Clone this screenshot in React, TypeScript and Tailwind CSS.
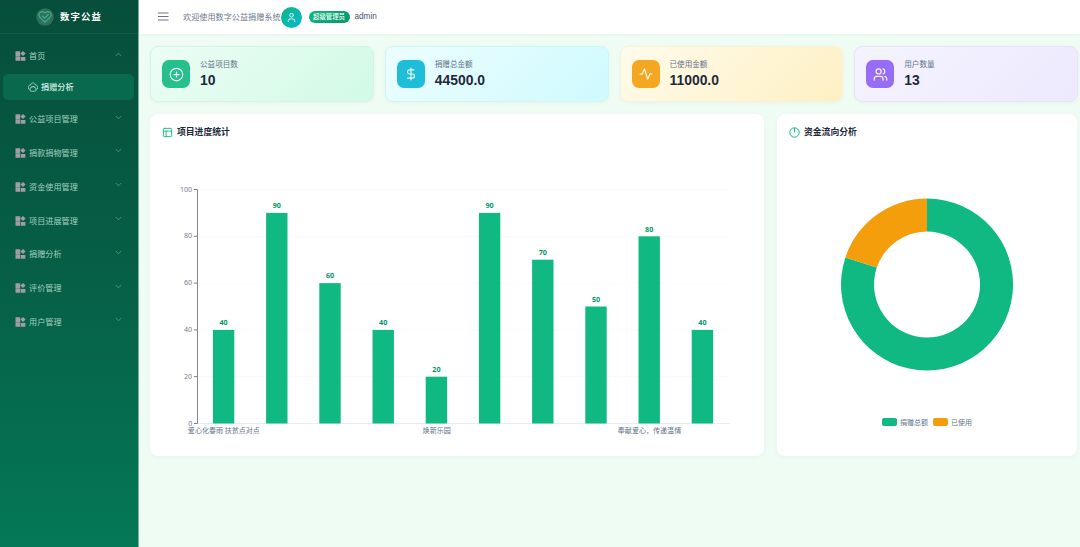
import React from "react";
import { Activity, CirclePlus, DollarSign, PanelsTopLeft, User, Users } from "lucide-react";

const MENU = ["公益项目管理", "捐款捐物管理", "资金使用管理", "项目进展管理", "捐赠分析", "评价管理", "用户管理"];
const BARS = [40, 90, 60, 40, 20, 90, 70, 50, 80, 40];
const CATEGORIES: { index: number; label: string }[] = [
  { index: 0, label: "爱心化春雨 扶贫点对点" },
  { index: 4, label: "焕新乐园" },
  { index: 8, label: "奉献爱心，传递温情" },
];

function Tiles() {
  return (
    <svg width="11" height="10" viewBox="0 0 11 10" fill="#a19da5" className="shrink-0">
      <path d="M0.5 0.2h4.7v4.9H.5zM.5 5.3h4.7v4.5H.5zM5.8 5.9h4.6v3.9H5.8zM8 0l2.6 2.5L8 5 5.4 2.5z" />
    </svg>
  );
}

function MenuRow({ label, open = false }: { label: string; open?: boolean }) {
  return (
    <div className="flex h-[33.8px] shrink-0 items-center pl-[15px] pr-[16px] pt-px">
      <Tiles />
      <span className="ml-[3px] grow text-[8.15px] leading-none text-[#a3cfc0]">{label}</span>
      <svg width="7" height="5" viewBox="0 0 7 5" fill="none" stroke="#5f9d89" strokeWidth="0.8" className="-mt-[4px]">
        <path d={open ? "M.8 4 3.5 1.2 6.2 4" : "M.8 1 3.5 3.8 6.2 1"} />
      </svg>
    </div>
  );
}

function Stat({ label, value, card, tile, children }: { label: string; value: string; card: string; tile: string; children: React.ReactNode }) {
  return (
    <div className={`flex h-[56px] items-center rounded-[8px] border pl-[11px] shadow-[0_1px_4px_rgba(16,120,90,0.05)] ${card}`}>
      <div className={`flex size-[28px] items-center justify-center rounded-[7px] text-white/90 ${tile}`}>{children}</div>
      <div className="ml-[10px] flex flex-col">
        <span className="text-[7.6px] leading-[10px] text-[#64748b]">{label}</span>
        <span className="mt-[2px] font-['Liberation_Sans',sans-serif] text-[13.9px] font-bold leading-[18px] text-[#1e293b]">{value}</span>
      </div>
    </div>
  );
}

function BarChart() {
  return (
    <svg width="614" height="306" viewBox="150 150 614 306" className="block">
      {[0, 20, 40, 60, 80, 100].map((v) => {
        const y = 423.5 - v * 2.34;
        return (
          <g key={v}>
            <path d={`M197.5 ${y}H729.5`} stroke={v === 0 ? "#e8edf0" : "#f8fafb"} strokeWidth="1" />
            <path d={`M194 ${y}h3.5`} stroke="#777b82" strokeWidth="1" />
            <text x="192.2" y={y + 2} textAnchor="end" fontSize="7.1" fill="#777d88" className="font-['Noto_Sans',sans-serif]">{v}</text>
          </g>
        );
      })}
      <path d="M197.5 189.5V423.5" stroke="#85888f" strokeWidth="1" />
      {BARS.map((v, i) => {
        const x = 223.6 + i * 53.2;
        return (
          <g key={i}>
            <rect x={x - 10.7} y={423.5 - v * 2.34} width="21.4" height={v * 2.34} fill="#10b981" />
            <text x={x} y={418.8 - v * 2.34} textAnchor="middle" fontSize="7.2" fontWeight="700" fill="#059669" className="font-['Noto_Sans',sans-serif]">{v}</text>
          </g>
        );
      })}
      {CATEGORIES.map((c) => (
        <text key={c.label} x={223.9 + c.index * 53.2} y="433.3" textAnchor="middle" fontSize="7.05" fill="#64748b">{c.label}</text>
      ))}
    </svg>
  );
}

function Donut() {
  return (
    <svg width="300" height="264" viewBox="777 150 300 264" className="block shrink-0">
      <path d="M927 198.5A86 86 0 1 1 845.4 257.4L876.8 267.6A53 53 0 1 0 927 231.5Z" fill="#10b981" />
      <path d="M845.4 257.4A86 86 0 0 1 927 198.5V231.5A53 53 0 0 0 876.8 267.6Z" fill="#f59e0b" />
    </svg>
  );
}

export default function App() {
  return (
    <div className="flex h-[547px] w-[1080px] overflow-hidden bg-[#effcf4] font-['Noto_Sans_CJK_SC',sans-serif]">
      <aside className="flex w-[139px] shrink-0 flex-col border-r border-[#7eaf9f] bg-[linear-gradient(180deg,#064e3b_0%,#065f46_50%,#047857_100%)]">
        <div className="flex h-[34px] shrink-0 items-center border-b border-white/5 pl-[36px]">
          <svg width="18" height="18" viewBox="0 0 18 18" fill="none">
            <circle cx="9" cy="9" r="8.7" fill="#336e5d" />
            <path d="M9 14.3 3.9 9.2C.8 5.4 6 1.8 9 5c3-3.2 8.2.4 5.1 4.2z" stroke="#37b58c" strokeWidth="1.1" />
            <path d="m6 7.6 2.7 2.6 3.9-4" stroke="#37b58c" strokeWidth="1.2" />
          </svg>
          <span className="ml-[6px] text-[9.4px] font-bold leading-none tracking-[1.1px] text-white">数字公益</span>
        </div>
        <nav className="flex flex-col pt-[5px]">
          <MenuRow label="首页" open />
          <div className="mb-[2px] ml-[3px] mr-[4px] mt-px flex h-[26px] shrink-0 items-center rounded-[5px] bg-[linear-gradient(90deg,#08694d,#07694d)] pl-[25px] pt-px">
            <svg width="10" height="10" viewBox="0 0 10 10" fill="none" stroke="#bce0d3" strokeWidth="0.75">
              <path d="M2.7 3.3C2.5.1 7.5.1 7.3 3.3M2.6 2.6C.7 3 .2 4.8.5 6.8l1.2.3M7.4 2.6c1.9.4 2.4 2.2 2.1 4.2l-1.2.3M2 8.8C1.2 2.9 8.8 2.9 8 8.8c-1.5.7-4.5.7-6 0zM3.8 5v1M6.2 5v1" />
            </svg>
            <span className="ml-[3px] text-[8.15px] font-medium leading-none text-[#d7eee6]">捐赠分析</span>
          </div>
          {MENU.map((m) => <MenuRow key={m} label={m} />)}
        </nav>
      </aside>

      <div className="flex grow flex-col">
        <header className="flex h-[34px] shrink-0 items-center bg-white pl-[19px] shadow-[0_1px_3px_rgba(0,0,0,0.03)]">
          <svg width="11" height="9" viewBox="0 0 11 9" stroke="#6b7280" strokeWidth="1.1" className="-mt-px shrink-0">
            <path d="M0 1h10.5M0 4.5h10.5M0 8h10.5" />
          </svg>
          <span className="ml-[14px] whitespace-nowrap text-[8.15px] leading-none text-[#707b8c]">欢迎使用数字公益捐赠系统</span>
          <div className="flex size-[21px] shrink-0 items-center justify-center rounded-full bg-[linear-gradient(135deg,#10b981,#06b6d4)] text-white">
            <User size={11} strokeWidth={1.8} />
          </div>
          <span className="ml-[7px] flex h-[12px] w-[41px] items-center justify-center whitespace-nowrap rounded-full bg-[linear-gradient(135deg,#10b981,#059669)] text-[6.4px] font-medium leading-none text-white">超级管理员</span>
          <span className="ml-[5px] pt-px font-['Liberation_Sans',sans-serif] text-[8.2px] leading-none text-[#475569]">admin</span>
        </header>

        <main className="flex flex-col gap-[12px] pl-[11px] pr-[2px] pt-[12px]">
          <section className="grid grid-cols-4 gap-[11px]">
            <Stat label="公益项目数" value="10" card="border-[#d4f4e4] bg-[linear-gradient(135deg,#ecfdf5,#d1fae5)]" tile="bg-[#27c08d]">
              <CirclePlus size={15} strokeWidth={2} />
            </Stat>
            <Stat label="捐赠总金额" value="44500.0" card="border-[#d0f5f5] bg-[linear-gradient(135deg,#ecfeff,#cffafe)]" tile="bg-[#1ebdd8]">
              <DollarSign size={14} strokeWidth={2} />
            </Stat>
            <Stat label="已使用金额" value="11000.0" card="border-[#f9f2d9] bg-[linear-gradient(135deg,#fffbeb,#fef0c3)]" tile="bg-[#f4a822]">
              <svg width="14" height="14" viewBox="0 0 14 14" fill="none" stroke="currentColor" strokeWidth="1.2" strokeLinecap="round" strokeLinejoin="round">
                <path d="M1.2 7.2h1.9L5.5 2l3.2 10 2.4-5.2h1.7" />
              </svg>
            </Stat>
            <Stat label="用户数量" value="13" card="border-[#e6e4f6] bg-[linear-gradient(135deg,#f5f3ff,#ede9fe)]" tile="bg-[#976cf6]">
              <Users size={15} strokeWidth={2} />
            </Stat>
          </section>

          <section className="flex h-[342px] gap-[13px]">
            <div className="flex w-[614px] shrink-0 flex-col overflow-hidden rounded-[8px] bg-white shadow-[0_1px_5px_rgba(16,120,90,0.05)]">
              <h2 className="flex h-[36px] shrink-0 items-center gap-[4px] pl-[12px] text-[8.8px] font-bold leading-none text-[#1e293b]">
                <PanelsTopLeft size={11} strokeWidth={2} className="text-[#10b981]" />
                <span>项目进度统计</span>
              </h2>
              <BarChart />
            </div>
            <div className="flex w-[300px] shrink-0 flex-col overflow-hidden rounded-[8px] bg-white shadow-[0_1px_5px_rgba(16,120,90,0.05)]">
              <h2 className="flex h-[36px] shrink-0 items-center gap-[4px] pl-[12px] text-[8.8px] font-bold leading-none text-[#1e293b]">
                <svg width="11" height="11" viewBox="0 0 11 11" fill="none" stroke="#10b981">
                  <circle cx="5.5" cy="5.5" r="4.7" />
                  <path d="M5.5 1v4.5" />
                </svg>
                <span>资金流向分析</span>
              </h2>
              <Donut />
              <div className="flex h-[16px] items-center justify-center gap-[5px] text-[7px] leading-none text-[#64748b]">
                <span className="flex items-center gap-[3px]"><i className="h-[8px] w-[15px] rounded-[2px] bg-[#10b981]" />捐赠总额</span>
                <span className="flex items-center gap-[3px]"><i className="h-[8px] w-[15px] rounded-[2px] bg-[#f59e0b]" />已使用</span>
              </div>
            </div>
          </section>
        </main>
      </div>
    </div>
  );
}
